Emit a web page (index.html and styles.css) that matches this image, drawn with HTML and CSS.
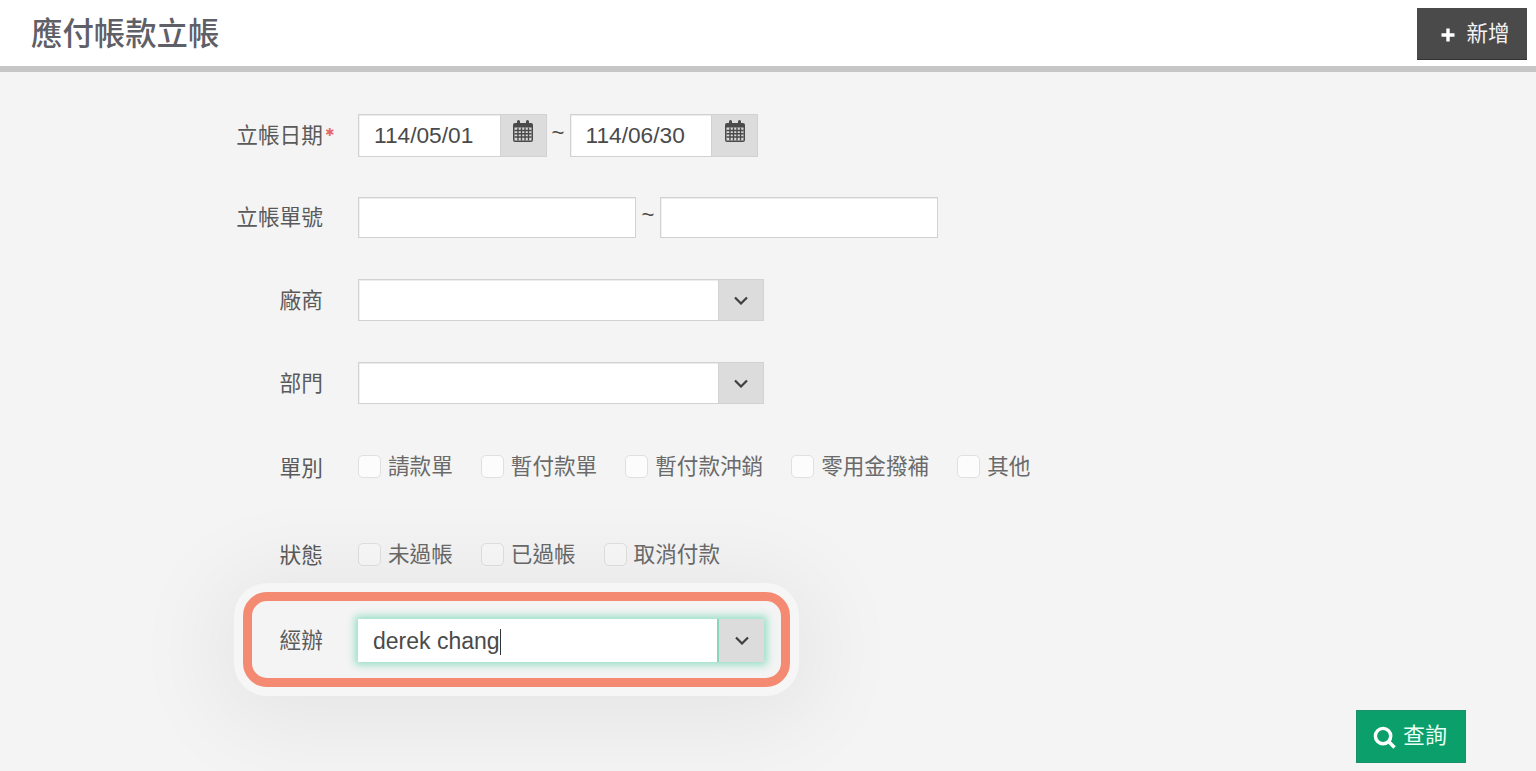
FILE: index.html
```html
<!DOCTYPE html>
<html lang="zh-Hant">
<head>
<meta charset="utf-8">
<title>應付帳款立帳</title>
<link rel="stylesheet" href="styles.css">
</head>
<body>
<header class="topbar">
  <h1 class="title">應付帳款立帳</h1>
  <button class="btn-add" type="button">
    <svg class="plus" viewBox="0 0 14 14" aria-hidden="true"><path d="M7 0.5v13M0.5 7h13"/></svg>
    <span>新增</span>
  </button>
</header>
<main class="page">
  <form class="form">
    <div class="row row-date">
      <label class="label">立帳日期<i class="req">✱</i></label>
      <div class="controls">
        <div class="date"><input class="input" value="114/05/01"><span class="addon"><svg class="cal" viewBox="0 0 20 22"><use href="#calendar"/></svg></span></div>
        <span class="tilde">~</span>
        <div class="date"><input class="input" value="114/06/30"><span class="addon"><svg class="cal" viewBox="0 0 20 22"><use href="#calendar"/></svg></span></div>
      </div>
    </div>
    <div class="row row-no">
      <label class="label">立帳單號</label>
      <div class="controls">
        <input class="input plain">
        <span class="tilde tilde-b">~</span>
        <input class="input plain">
      </div>
    </div>
    <div class="row row-combo">
      <label class="label">廠商</label>
      <div class="combo"><input class="input"><span class="addon"><svg class="chev" viewBox="0 0 14 9"><path d="M1 1.5l6 6 6-6"/></svg></span></div>
    </div>
    <div class="row row-combo2">
      <label class="label">部門</label>
      <div class="combo"><input class="input"><span class="addon"><svg class="chev" viewBox="0 0 14 9"><path d="M1 1.5l6 6 6-6"/></svg></span></div>
    </div>
    <div class="row row-check">
      <label class="label">單別</label>
      <div class="checks">
        <label class="check"><input type="checkbox">請款單</label>
        <label class="check"><input type="checkbox">暫付款單</label>
        <label class="check"><input type="checkbox">暫付款沖銷</label>
        <label class="check"><input type="checkbox">零用金撥補</label>
        <label class="check"><input type="checkbox">其他</label>
      </div>
    </div>
    <div class="row row-check2">
      <label class="label">狀態</label>
      <div class="checks">
        <label class="check"><input type="checkbox">未過帳</label>
        <label class="check"><input type="checkbox">已過帳</label>
        <label class="check"><input type="checkbox">取消付款</label>
      </div>
    </div>
    <div class="row row-focus">
      <span class="spot"></span>
      <label class="label">經辦</label>
      <div class="combo focus">
        <div class="input typed">derek chang<span class="caret"></span></div>
        <span class="addon"><svg class="chev" viewBox="0 0 14 9"><path d="M1 1.5l6 6 6-6"/></svg></span>
      </div>
    </div>
    <div class="actions">
      <button class="btn-search" type="button">
        <svg class="mag" viewBox="0 0 24 24"><circle cx="10.5" cy="10.5" r="8"/><path d="M16.5 16.5l6 6"/></svg>
        <span>查詢</span>
      </button>
    </div>
  </form>
</main>
<svg class="defs" aria-hidden="true">
  <symbol id="calendar" viewBox="0 0 20 22">
    <path fill="#4a4a4a" d="M2 3h2V1.5a1.5 1.5 0 0 1 3 0V3h6V1.5a1.5 1.5 0 0 1 3 0V3h2a2 2 0 0 1 2 2v15a2 2 0 0 1-2 2H2a2 2 0 0 1-2-2V5a2 2 0 0 1 2-2z"/>
    <rect x="1.5" y="7.5" width="17" height="13" fill="#d9d9d9"/>
    <path stroke="#4a4a4a" stroke-width="1.4" d="M1.5 10.5h17M1.5 13.8h17M1.5 17h17M5 7.5v13M8.5 7.5v13M12 7.5v13M15.5 7.5v13"/>
  </symbol>
</svg>
</body>
</html>
```
FILE: styles.css
```css
* { box-sizing: border-box; }
html, body { margin: 0; height: 100%; }
body {
  background: #f4f4f4;
  color: #4a4a4a;
  font-family: "Liberation Sans", "Noto Sans CJK TC", sans-serif;
  overflow: hidden;
}
.defs { display: none; }

.topbar {
  height: 72px;
  background: #fff;
  border-bottom: 6px solid #c6c6c6;
  display: flex;
  align-items: flex-start;
  justify-content: space-between;
  padding: 9px 9px 0 31px;
}
.title {
  margin: 0;
  font-size: 31.4px;
  font-weight: 500;
  line-height: 52px;
  color: #5f5f68;
}
.btn-add {
  width: 110px;
  height: 52px;
  margin-top: -1px;
  background: #4a4a4a;
  border: 0;
  border-bottom: 1px solid #333;
  color: #f2f2f2;
  font: inherit;
  font-size: 21.5px;
  display: flex;
  align-items: center;
  justify-content: center;
  gap: 11px;
  padding: 0 0 5px 7px;
}
.plus { width: 14px; height: 14px; fill: none; stroke: #fff; stroke-width: 3.4; margin-top: 7px; }

.form { position: relative; padding-top: 42px; }
.row { display: flex; align-items: center; position: relative; }
.label {
  width: 323px;
  flex: none;
  text-align: right;
  font-size: 21.7px;
  color: #5a5a5a;
  position: relative;
  top: -2px;
  margin-right: 35px;
}
.req {
  position: absolute;
  left: 100%;
  top: 8px;
  margin-left: 2px;
  color: #e46a6a;
  font-style: normal;
  font-family: "DejaVu Sans", sans-serif;
  font-size: 11px;
  line-height: 14px;
  font-weight: 700;
}
.controls { display: flex; align-items: center; }
.input {
  border: 1px solid #d2d2d2;
  background: #fff;
  box-shadow: inset 0 1px 0 #ececec, inset 1px 0 0 #f2f2f2;
  font: inherit;
  font-size: 22.7px;
  color: #4a4a4a;
  padding: 0 15px;
  height: 100%;
  min-width: 0;
  outline: 0;
}
.addon {
  flex: none;
  background: #dcdcdc;
  border: 1px solid #d2d2d2;
  border-left: 0;
  display: flex;
  align-items: center;
  justify-content: center;
}
.date { display: flex; height: 43px; }
.date .input { width: 142.5px; }
.date .addon { width: 46px; align-items: flex-start; padding-top: 5px; }
.cal { width: 20px; height: 22px; }
.tilde { font-size: 22px; width: 23px; text-align: center; margin-top: -6px; }
.tilde-b { width: 24px; }
.plain { width: 278px; height: 41px; }
.combo { display: flex; height: 42px; width: 406px; }
.combo .input { flex: 1; }
.combo .addon { width: 45px; }
.chev { width: 14px; height: 9px; fill: none; stroke: #3f3f3f; stroke-width: 2.2; }

.row-date { height: 43px; }
.row-no { height: 41px; margin-top: 40px; }
.row-combo { height: 42px; margin-top: 41px; }
.row-combo2 { height: 42px; margin-top: 41px; }
.row-check { height: 42px; margin-top: 42px; }
.row-check2 { height: 42px; margin-top: 46px; }
.row-focus { height: 43px; margin-top: 43px; }

.checks { display: flex; gap: 28px; }
.check {
  display: flex;
  align-items: center;
  gap: 7px;
  font-size: 21.6px;
  line-height: 26px;
  color: #6a6a6a;
}
.check input {
  appearance: none;
  width: 23px;
  height: 23px;
  margin: 0;
  background: #fcfcfc;
  border: 1px solid #e0e0e0;
  border-radius: 5px;
}
.row-check .label { top: -1px; }
.row-check2 .label { top: -2px; }
.row-check .checks { margin-top: -1px; }
.row-check2 .checks { margin-top: -1px; }
.row-check2 .check input { background: #f8f8f8; }

.focus { height: 43px; width: 406px; box-shadow: 0 0 8px 3px #96dfc5; background: #fff; }
.typed {
  flex: 1;
  display: flex;
  align-items: center;
  border: 0;
  border-right: 2px solid #8ad6bb;
  box-shadow: none;
  font-size: 23px;
  padding: 2px 0 0 15px;
}
.caret { display: inline-block; width: 1px; height: 26px; background: #333; }
.focus .addon { border: 0; }

.spot {
  position: absolute;
  left: 243px;
  top: -27px;
  width: 547px;
  height: 95px;
  border: 9px solid #f48a72;
  border-radius: 24px;
  box-shadow: 0 0 0 9px #f6f6f6, 0 10px 90px 30px rgba(0, 0, 0, 0.06);
  pointer-events: none;
}

.actions { display: flex; justify-content: flex-end; padding: 48px 70px 0 0; }
.btn-search {
  width: 110px;
  height: 53px;
  background: #0a9f6b;
  border: 1px solid #1b8f68;
  color: #eafff6;
  font: inherit;
  font-size: 22px;
  display: flex;
  align-items: center;
  justify-content: center;
  gap: 7px;
  padding: 0 0 3px 0;
}
.btn-search span { margin-top: -5px; }
.mag { width: 23px; height: 23px; fill: none; stroke: #fff; stroke-width: 3.6; margin: 5px 0 0 -2px; }
```
